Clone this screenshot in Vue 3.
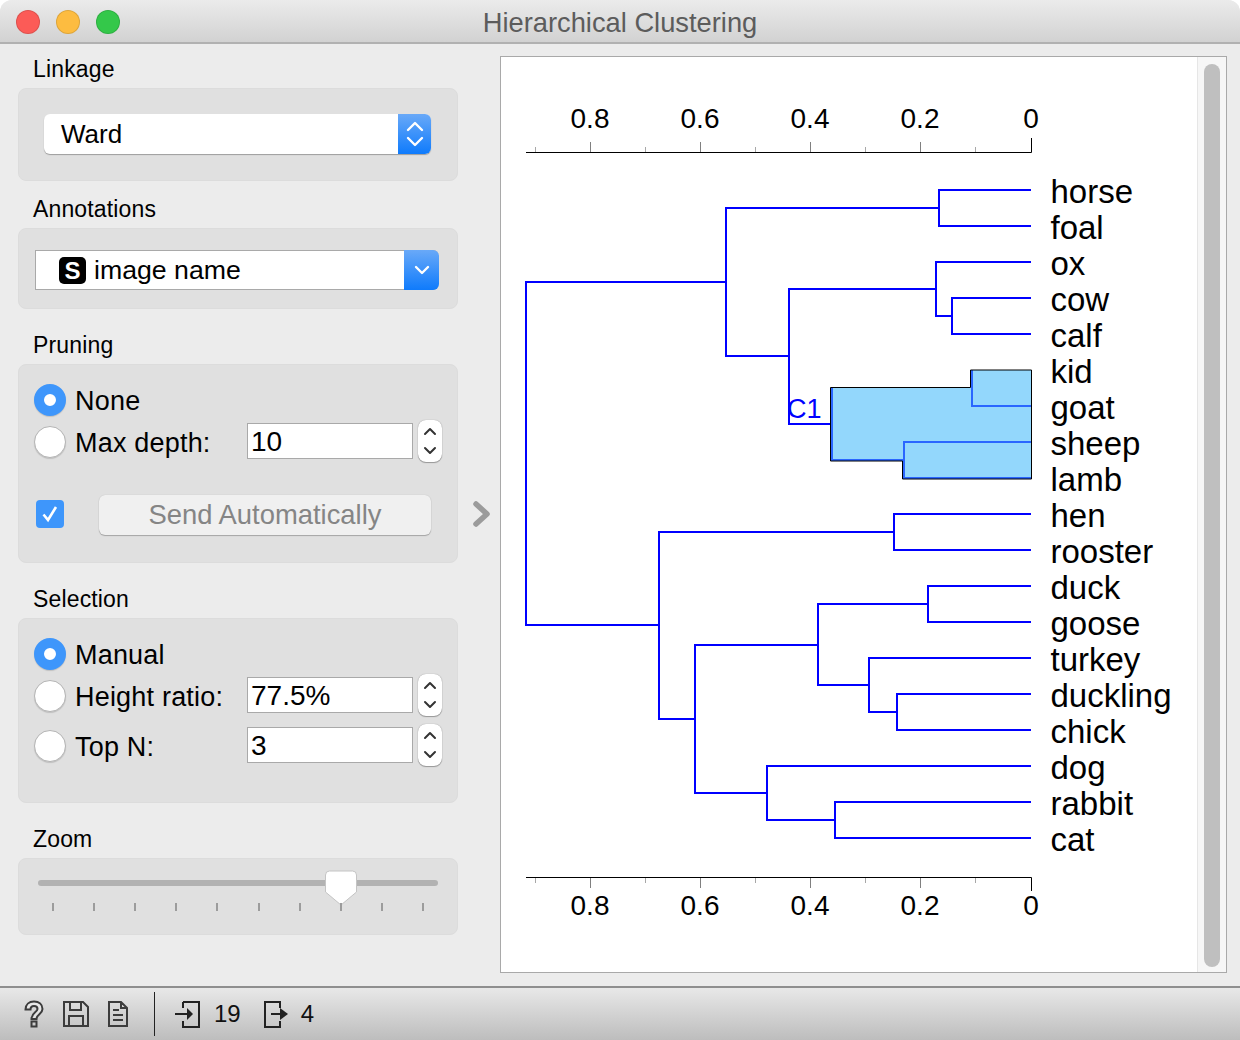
<script setup>
const leaves = ['horse', 'foal', 'ox', 'cow', 'calf', 'kid', 'goat', 'sheep', 'lamb', 'hen', 'rooster', 'duck', 'goose', 'turkey', 'duckling', 'chick', 'dog', 'rabbit', 'cat']
const leafY = i => 190 + i * 36

// each link: [parent x, top y, top child x, bottom y, bottom child x]
const links = [
  [939, 190, 1031, 226, 1031],
  [952, 298, 1031, 334, 1031],
  [936, 262, 1031, 316, 952],
  [789, 289, 936, 424, 830],
  [726, 208, 939, 356, 789],
  [526, 282, 726, 625, 659],
  [894, 514, 1031, 550, 1031],
  [928, 586, 1031, 622, 1031],
  [897, 694, 1031, 730, 1031],
  [869, 658, 1031, 712, 897],
  [818, 604, 928, 685, 869],
  [835, 802, 1031, 838, 1031],
  [767, 766, 1031, 820, 835],
  [695, 645, 818, 793, 767],
  [659, 532, 894, 719, 695]
]
const linkPath = ([x, y1, x1, y2, x2]) => `M${x1} ${y1}H${x}V${y2}H${x2}`

const majors = [
  { x: 590, label: '0.8' },
  { x: 700, label: '0.6' },
  { x: 810, label: '0.4' },
  { x: 920, label: '0.2' }
]
const minors = [535, 645, 755, 865, 975]
const sliderTicks = [53, 94, 135, 176, 217, 259, 300, 341, 382, 423]
</script>

<template>
  <div class="window">
    <header class="titlebar">
      <div class="lights">
        <span class="light red"></span>
        <span class="light yellow"></span>
        <span class="light green"></span>
      </div>
      <div class="title">Hierarchical Clustering</div>
    </header>

    <main class="main">
      <aside class="controls">
        <div class="caption">Linkage</div>
        <section class="group linkage">
          <div class="combo">
            <span class="combo-text">Ward</span>
            <span class="combo-btn">
              <svg width="20" height="32" viewBox="0 0 20 32"><path d="M3 12l7-7 7 7M3 20l7 7 7-7" fill="none" stroke="#fff" stroke-width="2.4" stroke-linecap="round" stroke-linejoin="round"/></svg>
            </span>
          </div>
        </section>

        <div class="caption">Annotations</div>
        <section class="group annotations">
          <div class="dropdown">
            <span class="badge">S</span>
            <span class="dropdown-text">image name</span>
            <span class="dropdown-btn">
              <svg width="16" height="12" viewBox="0 0 16 12"><path d="M2 3l6 6 6-6" fill="none" stroke="#fff" stroke-width="2.4" stroke-linecap="round" stroke-linejoin="round"/></svg>
            </span>
          </div>
        </section>

        <div class="caption wide">Pruning</div>
        <section class="group pruning">
          <label class="row">
            <span class="radio on"></span>
            <span class="row-label">None</span>
          </label>
          <label class="row next">
            <span class="radio"></span>
            <span class="row-label fixed">Max depth:</span>
            <span class="spin-input">10</span>
            <span class="stepper">
              <svg width="14" height="32" viewBox="0 0 14 32"><path d="M2 9l5-5 5 5M2 23l5 5 5-5" fill="none" stroke="#333" stroke-width="2" stroke-linecap="round" stroke-linejoin="round"/></svg>
            </span>
          </label>
          <div class="send-row">
            <span class="check">
              <svg width="20" height="20" viewBox="0 0 20 20"><path d="M3.500 10.500l4.500 5.500 8-13" fill="none" stroke="#fff" stroke-width="2.600"/></svg>
            </span>
            <button class="send">Send Automatically</button>
          </div>
        </section>

        <div class="caption wide">Selection</div>
        <section class="group selection">
          <label class="row">
            <span class="radio on"></span>
            <span class="row-label">Manual</span>
          </label>
          <label class="row next">
            <span class="radio"></span>
            <span class="row-label fixed">Height ratio:</span>
            <span class="spin-input">77.5%</span>
            <span class="stepper">
              <svg width="14" height="32" viewBox="0 0 14 32"><path d="M2 9l5-5 5 5M2 23l5 5 5-5" fill="none" stroke="#333" stroke-width="2" stroke-linecap="round" stroke-linejoin="round"/></svg>
            </span>
          </label>
          <label class="row last">
            <span class="radio"></span>
            <span class="row-label fixed">Top N:</span>
            <span class="spin-input">3</span>
            <span class="stepper">
              <svg width="14" height="32" viewBox="0 0 14 32"><path d="M2 9l5-5 5 5M2 23l5 5 5-5" fill="none" stroke="#333" stroke-width="2" stroke-linecap="round" stroke-linejoin="round"/></svg>
            </span>
          </label>
        </section>

        <div class="caption wide">Zoom</div>
        <section class="group zoom">
          <div class="track"></div>
          <svg class="handle" width="34" height="38" viewBox="0 0 34 38">
            <path d="M1.500 6a4 4 0 0 1 4-4h23a4 4 0 0 1 4 4v17L17 36 1.500 23z" fill="#fff" stroke="#c4c4c4" stroke-width="1"/>
          </svg>
          <div class="ticks">
            <span v-for="t in sliderTicks" :key="t" class="tick" :style="{ left: t - 20 + 'px' }"></span>
          </div>
        </section>
      </aside>

      <div class="gutter">
        <svg width="22" height="28" viewBox="0 0 22 28"><path d="M5 4l11 10L5 24" fill="none" stroke="#9b9b9b" stroke-width="5.500" stroke-linejoin="round" stroke-linecap="round"/></svg>
      </div>

      <div class="canvas">
        <svg class="plot" width="696" height="915" viewBox="501 57 696 915">
          <g class="axis-labels">
            <text v-for="m in majors" :key="m.x" :x="m.x" y="128" text-anchor="middle">{{ m.label }}</text>
            <text x="1031" y="128" text-anchor="middle">0</text>
            <text v-for="m in majors" :key="'b' + m.x" :x="m.x" y="915" text-anchor="middle">{{ m.label }}</text>
            <text x="1031" y="915" text-anchor="middle">0</text>
          </g>

          <path d="M526 152.500H1031.500V138" fill="none" stroke="#000" stroke-width="1"/>
          <path d="M526 877.500H1031.500V891" fill="none" stroke="#000" stroke-width="1"/>
          <g stroke="#808080" stroke-width="1">
            <path v-for="m in majors" :key="m.x" :d="`M${m.x + 0.5} 142V152M${m.x + 0.5} 878V888`"/>
          </g>
          <g stroke="#a8a8a8" stroke-width="1">
            <path v-for="x in minors" :key="x" :d="`M${x + 0.5} 147V152M${x + 0.5} 878V883`"/>
          </g>

          <path d="M970.500 370H1031.500V479H903V461H830.500V387.500H970.500z" fill="#93d7fc"/>
          <path d="M972 370V406H1031M1031 442H904V478H1031M832 388V460H903" fill="none" stroke="#2a66ff" stroke-width="2"/>
          <path d="M970.500 370H1031.500V479H902.500V461H830.500V387.500H970.500z" fill="none" stroke="#000" stroke-width="1"/>

          <g fill="none" stroke="#0000ff" stroke-width="2">
            <path v-for="(l, i) in links" :key="i" :d="linkPath(l)"/>
          </g>
          <text class="cluster" x="787" y="418">C1</text>

          <text v-for="(name, i) in leaves" :key="name" class="leaf" x="1050.500" :y="leafY(i) + 13">{{ name }}</text>
        </svg>
        <div class="scrollbar"><div class="thumb"></div></div>
      </div>
    </main>

    <footer class="statusbar">
      <svg class="ico" width="20" height="28" viewBox="0 0 20 28"><path d="M1.500 9.500C1.500 4.500 5 1.500 10 1.500s8.500 3 8.500 7.500c0 5-6 5.500-6 10h-5c0-6.500 6-7 6-10 0-2-1.500-3-3.500-3s-3.500 1.500-3.500 3.500z" fill="#fff" fill-opacity=".4" stroke="#3c3c3c" stroke-width="2"/><rect x="7.500" y="21.500" width="5" height="5" fill="none" stroke="#3c3c3c" stroke-width="2"/></svg>
      <svg class="ico save" width="28" height="28" viewBox="0 0 28 28"><path d="M2 2h19l5 5v19H2z M8 2v8h11V2 M7 26V16h14v10" fill="none" stroke="#3c3c3c" stroke-width="2"/></svg>
      <svg class="ico doc" width="22" height="28" viewBox="0 0 22 28"><path d="M2 2h12l6 6v18H2z M14 2v6h6 M6 10h6M6 15h10M6 20h10" fill="none" stroke="#3c3c3c" stroke-width="2"/></svg>
      <span class="divider"></span>
      <svg class="ico input" width="26" height="28" viewBox="0 0 26 28"><path d="M8 2h16v25H8v-6M8 2v6M0 14h14" fill="none" stroke="#222" stroke-width="2"/><path d="M12 8l6 6-6 6z" fill="#222"/></svg>
      <span class="count in">19</span>
      <svg class="ico output" width="26" height="28" viewBox="0 0 26 28"><path d="M17 8V2H2v25h15v-6M8 14h10" fill="none" stroke="#222" stroke-width="2"/><path d="M17 8l8 6-8 6z" fill="#222"/></svg>
      <span class="count out">4</span>
    </footer>
  </div>
</template>

<style>
html, body {
  margin: 0;
  background: #fff;
}
</style>

<style scoped>
* {
  box-sizing: border-box;
}

.window {
  width: 1240px;
  height: 1040px;
  background: #ececec;
  border-radius: 12px 12px 0 0;
  overflow: hidden;
  font-family: "Liberation Sans", Arial, sans-serif;
  color: #000;
  display: flex;
  flex-direction: column;
}

.titlebar {
  height: 44px;
  flex: none;
  display: flex;
  align-items: center;
  position: relative;
  background: linear-gradient(#ebebeb, #d2d2d2);
  border-bottom: 2px solid #b1b1b1;
}

.lights {
  display: flex;
  gap: 16px;
  padding-left: 16px;
  margin-top: 2px;
}

.light {
  width: 24px;
  height: 24px;
  border-radius: 50%;
  border: 1px solid rgba(0, 0, 0, 0.12);
}

.red { background: #fc5b57; }
.yellow { background: #fdbc40; }
.green { background: #34c84a; }

.title {
  position: absolute;
  left: 0;
  right: 0;
  top: 0;
  text-align: center;
  font-size: 27.300px;
  color: #5c5c5c;
  line-height: 46px;
}

.main {
  flex: 1;
  display: flex;
  padding-left: 18px;
  min-height: 0;
}

.controls {
  width: 440px;
  flex: none;
  padding-top: 11px;
}

.caption {
  font-size: 23px;
  letter-spacing: 0.15px;
  line-height: 28px;
  height: 28px;
  padding-left: 15px;
  margin-bottom: 5px;
}

.caption.wide {
  margin-top: 22px;
}

.group {
  background: #e0e0e0;
  border: 1px solid #dcdcdc;
  border-radius: 8px;
  margin-bottom: 14px;
}

.caption.wide + .group {
  margin-bottom: 0;
}

.linkage {
  height: 93px;
  padding: 25px 0 0 25px;
}

.annotations {
  height: 81px;
  padding: 21px 0 0 16px;
  margin-bottom: 0;
}

.pruning {
  height: 199px;
  padding: 19px 0 0 15px;
}

.selection {
  height: 185px;
  padding: 19px 0 0 15px;
}

.zoom {
  height: 77px;
  position: relative;
}

.combo {
  width: 387px;
  height: 40px;
  display: flex;
  align-items: center;
  background: #fff;
  border-radius: 6px;
  overflow: hidden;
  box-shadow: 0 1px 1px rgba(0, 0, 0, 0.3);
}

.combo-text {
  flex: 1;
  font-size: 26px;
  padding-left: 17px;
  padding-top: 1px;
}

.combo-btn {
  width: 33px;
  height: 40px;
  display: flex;
  align-items: center;
  justify-content: center;
  background: linear-gradient(#69a9f8, #0f7bfc);
}

.dropdown {
  width: 404px;
  height: 40px;
  display: flex;
  align-items: center;
  background: #fff;
  border: 1px solid #a9a9a9;
  border-right: none;
  border-radius: 0 6px 6px 0;
}

.badge {
  width: 27px;
  height: 27px;
  margin-left: 23px;
  background: #000;
  color: #fff;
  border-radius: 5px;
  font-size: 24px;
  font-weight: 700;
  line-height: 27px;
  text-align: center;
}

.dropdown-text {
  flex: 1;
  font-size: 26.700px;
  padding-left: 8px;
}

.dropdown-btn {
  width: 35px;
  height: 40px;
  margin: -1px 0;
  display: flex;
  align-items: center;
  justify-content: center;
  background: linear-gradient(#69a9f8, #0f7bfc);
  border-radius: 0 6px 6px 0;
}

.row {
  display: flex;
  align-items: center;
  height: 32px;
  font-size: 27px;
  letter-spacing: 0.2px;
}

.row.next {
  margin-top: 10px;
}

.row.last {
  margin-top: 18px;
}

.radio {
  width: 32px;
  height: 32px;
  flex: none;
  border-radius: 50%;
  background: #fff;
  border: 1px solid #b4b4b4;
  box-shadow: 0 1px 1px rgba(0, 0, 0, 0.15);
}

.radio.on {
  border: 10.500px solid #3e96fb;
}

.row-label {
  margin-left: 9px;
  padding-top: 2px;
}

.row-label.fixed {
  width: 172px;
  flex: none;
}

.spin-input {
  width: 166px;
  height: 36px;
  flex: none;
  margin-top: -2px;
  padding-left: 3px;
  background: #fff;
  border: 1px solid #a9a9a9;
  font-size: 28px;
  letter-spacing: 0;
  line-height: 35px;
}

.stepper {
  width: 24px;
  height: 42px;
  flex: none;
  margin: -2px 0 0 5px;
  display: flex;
  align-items: center;
  justify-content: center;
  background: #fff;
  border-radius: 8px;
  box-shadow: 0 1px 1px rgba(0, 0, 0, 0.3), 0 0 1px rgba(0, 0, 0, 0.4);
}

.send-row {
  display: flex;
  align-items: center;
  margin-top: 37px;
}

.check {
  width: 28px;
  height: 28px;
  margin: -2px 0 0 2px;
  flex: none;
  display: flex;
  align-items: center;
  justify-content: center;
  background: #3e96fb;
  border-radius: 4px;
}

.send {
  width: 332px;
  height: 40px;
  margin-left: 35px;
  padding: 0;
  font-family: inherit;
  font-size: 27.400px;
  color: #858585;
  background: #f0f0f0;
  border: none;
  border-radius: 6px;
  box-shadow: 0 1px 1px rgba(0, 0, 0, 0.25), 0 0 1px rgba(0, 0, 0, 0.2);
}

.track {
  position: absolute;
  left: 19px;
  top: 21px;
  width: 400px;
  height: 6px;
  background: #b2b2b2;
  border-radius: 3px;
}

.handle {
  position: absolute;
  left: 305px;
  top: 10px;
}

.ticks {
  position: absolute;
  left: 0;
  top: 44px;
}

.tick {
  position: absolute;
  top: 0;
  width: 2px;
  height: 8px;
  background: #9c9c9c;
}

.gutter {
  width: 42px;
  flex: none;
  padding: 456px 0 0 13px;
}

.canvas {
  width: 727px;
  height: 917px;
  margin-top: 12px;
  display: flex;
  background: #fff;
  border: 1px solid #a9a9a9;
}

.plot {
  flex: none;
  display: block;
}

.axis-labels text {
  font-size: 28px;
  fill: #000;
}

.cluster {
  font-size: 27px;
  fill: #0000ff;
}

.leaf {
  font-size: 33px;
  fill: #000;
}

.scrollbar {
  flex: 1;
  background: #f6f6f6;
  border-left: 1px solid #e6e6e6;
  padding: 7px 6px 5px 6px;
}

.thumb {
  height: 100%;
  background: #bfbfbf;
  border-radius: 8px;
}

.statusbar {
  height: 54px;
  flex: none;
  display: flex;
  align-items: center;
  background: linear-gradient(#e8e8e8, #bdbdbd);
  border-top: 2px solid #8f8f8f;
}

.ico {
  flex: none;
}

.ico:first-child {
  margin-left: 24px;
}

.save {
  margin-left: 18px;
}

.doc {
  margin-left: 17px;
}

.divider {
  width: 1px;
  height: 44px;
  margin-left: 25px;
  background: #222;
}

.input {
  margin-left: 20px;
}

.count {
  font-size: 24px;
  color: #111;
}

.count.in {
  margin-left: 13px;
}

.output {
  margin-left: 22px;
}

.count.out {
  margin-left: 12px;
}
</style>
